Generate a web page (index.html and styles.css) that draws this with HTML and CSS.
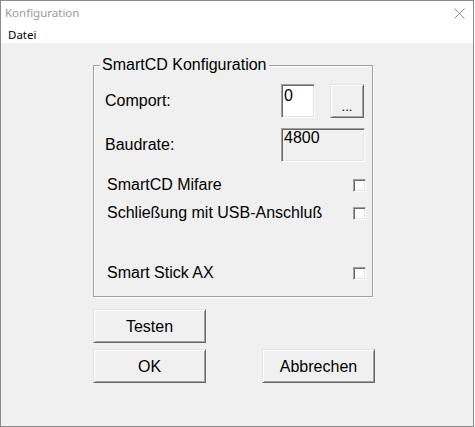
FILE: index.html
```html
<!DOCTYPE html>
<html lang="de">
<head>
<meta charset="utf-8">
<title>Konfiguration</title>
<link rel="stylesheet" href="styles.css">
</head>
<body>
<div class="window">
  <div class="titlebar">
    <span class="title">Konfiguration</span>
    <svg class="close" width="11" height="11" viewBox="0 0 11 11"><path d="M0.5 0.5 L10.5 10.5 M10.5 0.5 L0.5 10.5" stroke="#8f8f8f" stroke-width="1" fill="none"/></svg>
  </div>
  <div class="menubar"><span class="menu-item">Datei</span></div>
  <div class="client">
    <div class="group">
      <span class="legend">SmartCD Konfiguration</span>
      <div class="field-row">
        <span class="label">Comport:</span>
        <div class="edit comport">0</div>
        <div class="btn dots">...</div>
      </div>
      <div class="field-row baud">
        <span class="label">Baudrate:</span>
        <div class="edit readonly">4800</div>
      </div>
      <div class="check-row first"><span class="label">SmartCD Mifare</span><span class="checkbox"></span></div>
      <div class="check-row"><span class="label">Schließung mit USB-Anschluß</span><span class="checkbox"></span></div>
      <div class="check-row last"><span class="label">Smart Stick AX</span><span class="checkbox"></span></div>
    </div>
    <div class="actions">
      <div class="btn action">Testen</div>
      <div class="action-row">
        <div class="btn action">OK</div>
        <div class="btn action">Abbrechen</div>
      </div>
    </div>
  </div>
</div>
</body>
</html>
```
FILE: styles.css
```css
html, body {
  margin: 0;
  padding: 0;
  background: #ffffff;
}

body {
  font-family: "Liberation Sans", Arial, sans-serif;
  color: #000;
}

.window {
  width: 474px;
  height: 427px;
  box-sizing: border-box;
  border: 1px solid #8a8a8a;
  display: flex;
  flex-direction: column;
  background: #f0f0f0;
}

.titlebar {
  height: 22px;
  background: #fff;
  display: flex;
  justify-content: space-between;
  align-items: flex-start;
  padding: 4px 8px 0 4px;
  box-sizing: border-box;
}

.title {
  font-family: "Noto Sans", sans-serif;
  font-size: 11.5px;
  line-height: 16px;
  color: #999;
}

.close {
  margin-top: 3px;
  display: block;
}

.menubar {
  height: 20px;
  background: #fff;
  box-sizing: border-box;
  padding: 3px 0 0 7px;
}

.menu-item {
  font-family: "Noto Sans", sans-serif;
  font-size: 11.5px;
  line-height: 17px;
  color: #000;
  display: block;
}

.client {
  flex: 1;
  padding: 22px 0 0 92px;
}

.group {
  position: relative;
  width: 280px;
  box-sizing: border-box;
  border: 1px solid #a0a0a0;
  box-shadow: 1px 1px 0 #fff, inset 1px 1px 0 #fff;
  padding: 18px 0 9px 11px;
  font-size: 16px;
}

.legend {
  position: absolute;
  top: -10px;
  left: 6px;
  padding: 0 2px;
  background: #f0f0f0;
  line-height: 18px;
  font-size: 16px;
}

.field-row {
  display: grid;
  grid-template-columns: 161px 34px 34px;
  column-gap: 15px;
  height: 34px;
  align-items: center;
}

.field-row.baud {
  grid-template-columns: 161px 84px;
  margin-top: 10px;
}

.label {
  font-size: 16px;
  line-height: 18px;
  white-space: nowrap;
}

.edit {
  height: 34px;
  box-sizing: border-box;
  border: 1px solid;
  border-color: #a0a0a0 #fff #fff #a0a0a0;
  box-shadow: inset 1px 1px 0 #696969, inset -1px -1px 0 #e3e3e3;
  background: #fff;
  padding: 0 2px 0 2px;
  font-size: 16px;
  line-height: 16px;
}

.edit.comport {
  padding-top: 3px;
}

.edit.readonly {
  background: #f0f0f0;
  padding-top: 1px;
}

.btn {
  box-sizing: border-box;
  border: 1px solid;
  border-color: #e3e3e3 #696969 #696969 #e3e3e3;
  box-shadow: inset 1px 1px 0 #fff, inset -1px -1px 0 #a0a0a0;
  background: #f0f0f0;
  display: flex;
  align-items: center;
  justify-content: center;
}

.btn.dots {
  height: 34px;
  font-size: 13px;
  padding-top: 10px;
}

.check-row {
  display: grid;
  grid-template-columns: 246px 13px;
  height: 28px;
  align-items: center;
  margin-left: 2px;
}

.check-row.first {
  margin-top: 9px;
}

.check-row.last {
  margin-top: 32px;
}

.checkbox {
  width: 13px;
  height: 13px;
  box-sizing: border-box;
  border: 1px solid;
  border-color: #a0a0a0 #fff #fff #a0a0a0;
  box-shadow: inset 1px 1px 0 #696969, inset -1px -1px 0 #e3e3e3;
  background: #fff;
}

.actions {
  margin-top: 12px;
  display: flex;
  flex-direction: column;
  gap: 6px;
}

.action-row {
  display: flex;
  gap: 56px;
}

.btn.action {
  width: 113px;
  height: 34px;
  font-size: 16px;
  padding-top: 2px;
}
```
